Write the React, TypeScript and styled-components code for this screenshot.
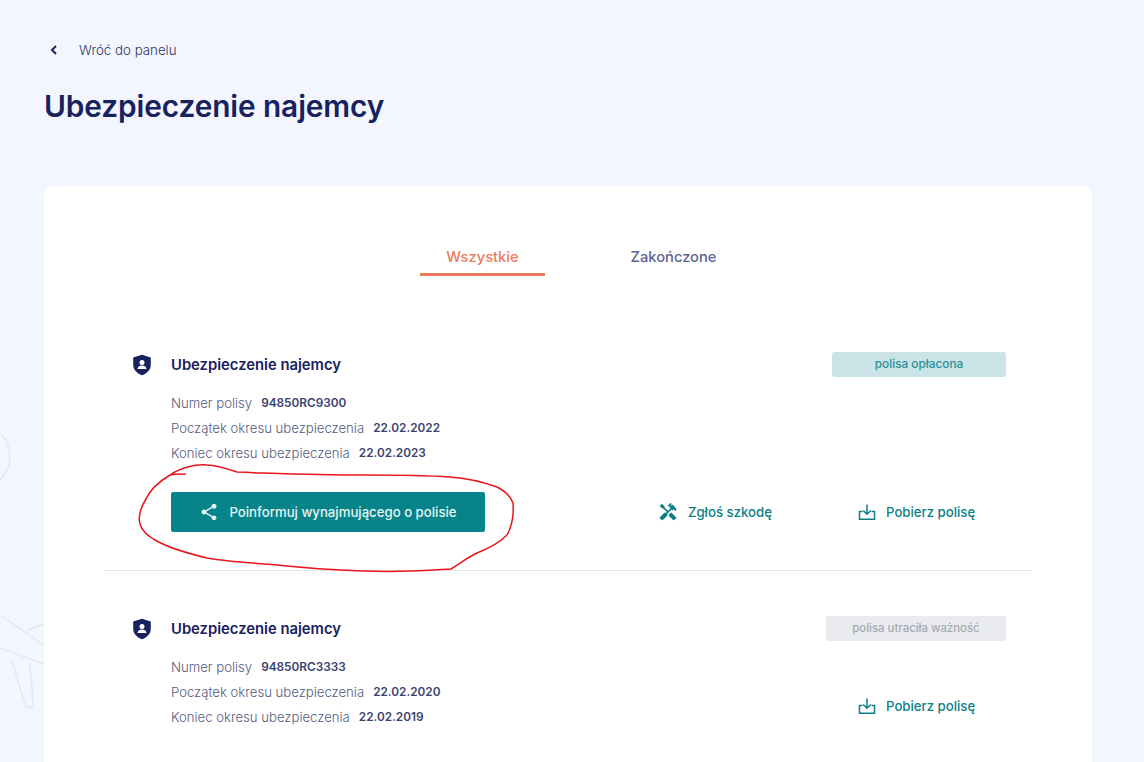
import React, { FunctionComponent } from 'react';
import styled, { createGlobalStyle } from 'styled-components';
import { MdHandyman, MdShare } from 'react-icons/md';

const PageBody = createGlobalStyle`
  html, body {
    margin: 0;
    padding: 0;
    background: #f3f6fe;
    font-family: Inter, "Open Sans", sans-serif;
  }
`;

const Page = styled.div`
    position: relative;
    height: 762px;
    overflow: hidden;
    box-sizing: border-box;
    padding: 41px 52px 0 44px;
`;
const Backdrop = styled.svg`
    position: absolute;
    left: 0;
    top: 420px;
`;
const Scribble = styled.svg`
    position: absolute;
    left: 0;
    top: 0;
    pointer-events: none;
`;
const BackLink = styled.a`
    display: flex;
    align-items: center;
    height: 18px;
    gap: 20px;
    padding-left: 5px;
    font-size: 13.3px;
    font-weight: 300;
    color: #2b3566;
`;
const Title = styled.h1`
    margin: 30px 0 0;
    font-size: 29.8px;
    line-height: 34px;
    font-weight: 600;
    letter-spacing: -0.1px;
    color: #18225f;
`;
const Card = styled.main`
    position: relative;
    margin-top: 63px;
    height: 640px;
    background: #fff;
    border-radius: 8px;
`;
const Tabs = styled.nav`
    display: flex;
    justify-content: center;
    gap: 66px;
    padding: 58px 0 0 20px;
`;
const Tab = styled.div<{ $active?: boolean }>`
    width: 125px;
    height: 32px;
    box-sizing: border-box;
    text-align: center;
    font-size: 14.7px;
    line-height: 26px;
    font-weight: 500;
    color: ${(p) => (p.$active ? '#ec7a5f' : '#5d6491')};
    border-bottom: 3px solid ${(p) => (p.$active ? '#ec7a5f' : 'transparent')};
`;
const Policy = styled.section<{ $top: number }>`
    margin: ${(p) => p.$top}px 86px 0 88px;
`;
const PolicyHead = styled.header`
    display: flex;
    align-items: center;
    height: 26px;
`;
const ShieldIcon = styled.svg`
    width: 20px;
    height: 22px;
    margin-right: 19px;
    flex: none;
`;
const PolicyName = styled.h2`
    flex: 1;
    margin: 0;
    font-size: 14.8px;
    font-weight: 600;
    color: #18225f;
`;
const Badge = styled.span<{ $expired?: boolean }>`
    align-self: flex-start;
    width: ${(p) => (p.$expired ? 180 : 174)}px;
    height: 25px;
    border-radius: 3px;
    text-align: center;
    font-size: ${(p) => (p.$expired ? 11.4 : 11.8)}px;
    line-height: 25px;
    font-weight: 500;
    color: ${(p) => (p.$expired ? '#a6a9b4' : '#2b8f96')};
    background: ${(p) => (p.$expired ? '#e9ebef' : '#c9e3e6')};
`;
const PolicyBody = styled.div`
    display: flex;
    justify-content: space-between;
    align-items: flex-end;
    padding: 12px 0 0 39px;
`;
const Details = styled.dl`
    margin: 0;
`;
const DetailRow = styled.div`
    display: flex;
    gap: 9px;
    height: 25px;
    align-items: center;
    font-size: 13.15px;
`;
const DetailLabel = styled.dt`
    font-weight: 300;
    color: #555c80;
`;
const DetailValue = styled.dd`
    margin: 0;
    font-size: 11.8px;
    font-weight: 600;
    color: #3a4270;
`;
const Actions = styled.div`
    display: flex;
    align-items: center;
    margin: 27px 0 0 39px;
`;
const ShareButton = styled.button`
    display: flex;
    align-items: center;
    justify-content: center;
    gap: 10px;
    width: 314px;
    height: 40px;
    margin-right: auto;
    padding: 0;
    border: none;
    border-radius: 2px;
    font-family: inherit;
    font-size: 13.2px;
    font-weight: 500;
    color: #e6f4f4;
    background: #07848a;
`;
const ActionLink = styled.a<{ $width: number; $lift?: number }>`
    display: flex;
    align-items: center;
    gap: 10px;
    width: ${(p) => p.$width}px;
    height: 24px;
    margin-bottom: ${(p) => p.$lift || 0}px;
    font-size: 13.2px;
    font-weight: 500;
    color: #0c7f86;
`;
const Divider = styled.hr`
    margin: 38px 60px 0;
    border: none;
    border-top: 1px solid #e4e5e8;
`;

const Shield: FunctionComponent = () => (
    <ShieldIcon viewBox="0 0 20 22">
        <path d="M10 .8 18.8 3.6v7.2c0 4.9-3.5 8.6-8.8 10.4C4.7 19.4 1.200 15.700 1.200 10.800V3.600z" fill="#18225f" />
        <circle cx="10" cy="8.600" r="2.500" fill="#fff" />
        <path d="M5.400 15c.3-2.300 2.300-3.400 4.600-3.400s4.300 1.100 4.600 3.400z" fill="#fff" />
    </ShieldIcon>
);

const DownloadIcon: FunctionComponent = () => (
    <svg width="18" height="18" viewBox="0 0 18 18" fill="none" stroke="#0c7f86" strokeWidth="1.500">
        <path d="M9 1.500v9.500M5.200 7.500 9 11.200l3.800-3.700" />
        <path d="M4.500 8.500H1.500v7.700h15V8.500h-3" />
    </svg>
);

const DownloadLink: FunctionComponent<{ lift?: number }> = ({ lift }) => (
    <ActionLink $width={148} $lift={lift}>
        <DownloadIcon />
        Pobierz polisę
    </ActionLink>
);

const PolicyDetails: FunctionComponent<{ number: string; start: string; end: string }> = ({ number, start, end }) => (
    <Details>
        <DetailRow>
            <DetailLabel>Numer polisy</DetailLabel>
            <DetailValue>{number}</DetailValue>
        </DetailRow>
        <DetailRow>
            <DetailLabel>Początek okresu ubezpieczenia</DetailLabel>
            <DetailValue>{start}</DetailValue>
        </DetailRow>
        <DetailRow>
            <DetailLabel>Koniec okresu ubezpieczenia</DetailLabel>
            <DetailValue>{end}</DetailValue>
        </DetailRow>
    </Details>
);

const App: FunctionComponent = () => {
    return (
        <>
            <PageBody />
            <Page>
                <Backdrop width="44" height="342" viewBox="0 0 44 342" fill="none" stroke="#e4e7f1" strokeWidth="1.500">
                    <path d="M1 14C9 22 12 36 8 48 6 53 3 57 0 60" />
                    <path d="M0 195 44 225M0 228 44 244M28 210 44 204M12 240 24 282C28 290 33 290 33 280L30 245" />
                </Backdrop>
                <BackLink>
                    <svg width="10" height="12" viewBox="0 0 10 12" fill="none" stroke="#18225f" strokeWidth="2">
                        <path d="M7 2 3 6l4 4" />
                    </svg>
                    Wróć do panelu
                </BackLink>
                <Title>Ubezpieczenie najemcy</Title>
                <Card>
                    <Tabs>
                        <Tab $active>Wszystkie</Tab>
                        <Tab>Zakończone</Tab>
                    </Tabs>
                    <Policy $top={76}>
                        <PolicyHead>
                            <Shield />
                            <PolicyName>Ubezpieczenie najemcy</PolicyName>
                            <Badge>polisa opłacona</Badge>
                        </PolicyHead>
                        <PolicyBody>
                            <PolicyDetails number="94850RC9300" start="22.02.2022" end="22.02.2023" />
                        </PolicyBody>
                        <Actions>
                            <ShareButton>
                                <MdShare size={20} />
                                Poinformuj wynajmującego o polisie
                            </ShareButton>
                            <ActionLink $width={200}>
                                <MdHandyman size={20} />
                                Zgłoś szkodę
                            </ActionLink>
                            <DownloadLink />
                        </Actions>
                    </Policy>
                    <Divider />
                    <Policy $top={45}>
                        <PolicyHead>
                            <Shield />
                            <PolicyName>Ubezpieczenie najemcy</PolicyName>
                            <Badge $expired>polisa utraciła ważność</Badge>
                        </PolicyHead>
                        <PolicyBody>
                            <PolicyDetails number="94850RC3333" start="22.02.2020" end="22.02.2019" />
                            <DownloadLink lift={11} />
                        </PolicyBody>
                    </Policy>
                </Card>
                <Scribble width="1144" height="762" viewBox="0 0 1144 762" fill="none" stroke="#e8151b" strokeWidth="1.500">
                    <path d="M186 474C178 474 174 474 170 475 160 481 150 490 146 499 141 507 138 517 140 524 142 531 147 535 155 540 165 546 178 551 207 558 230 562 255 563 277 565 305 568 335 570 363 571 395 572 425 571 451 569 462 562 470 556 477 553 490 548 500 542 507 535 512 526 514 515 513 503 510 495 505 491 497 487 480 481 465 478 450 477 420 475 390 475 363 475 330 475 295 474 263 473 250 473 243 472 237 472 225 468 215 465 207 465 195 464 180 468 170 475" />
                </Scribble>
            </Page>
        </>
    );
};

export default App;
